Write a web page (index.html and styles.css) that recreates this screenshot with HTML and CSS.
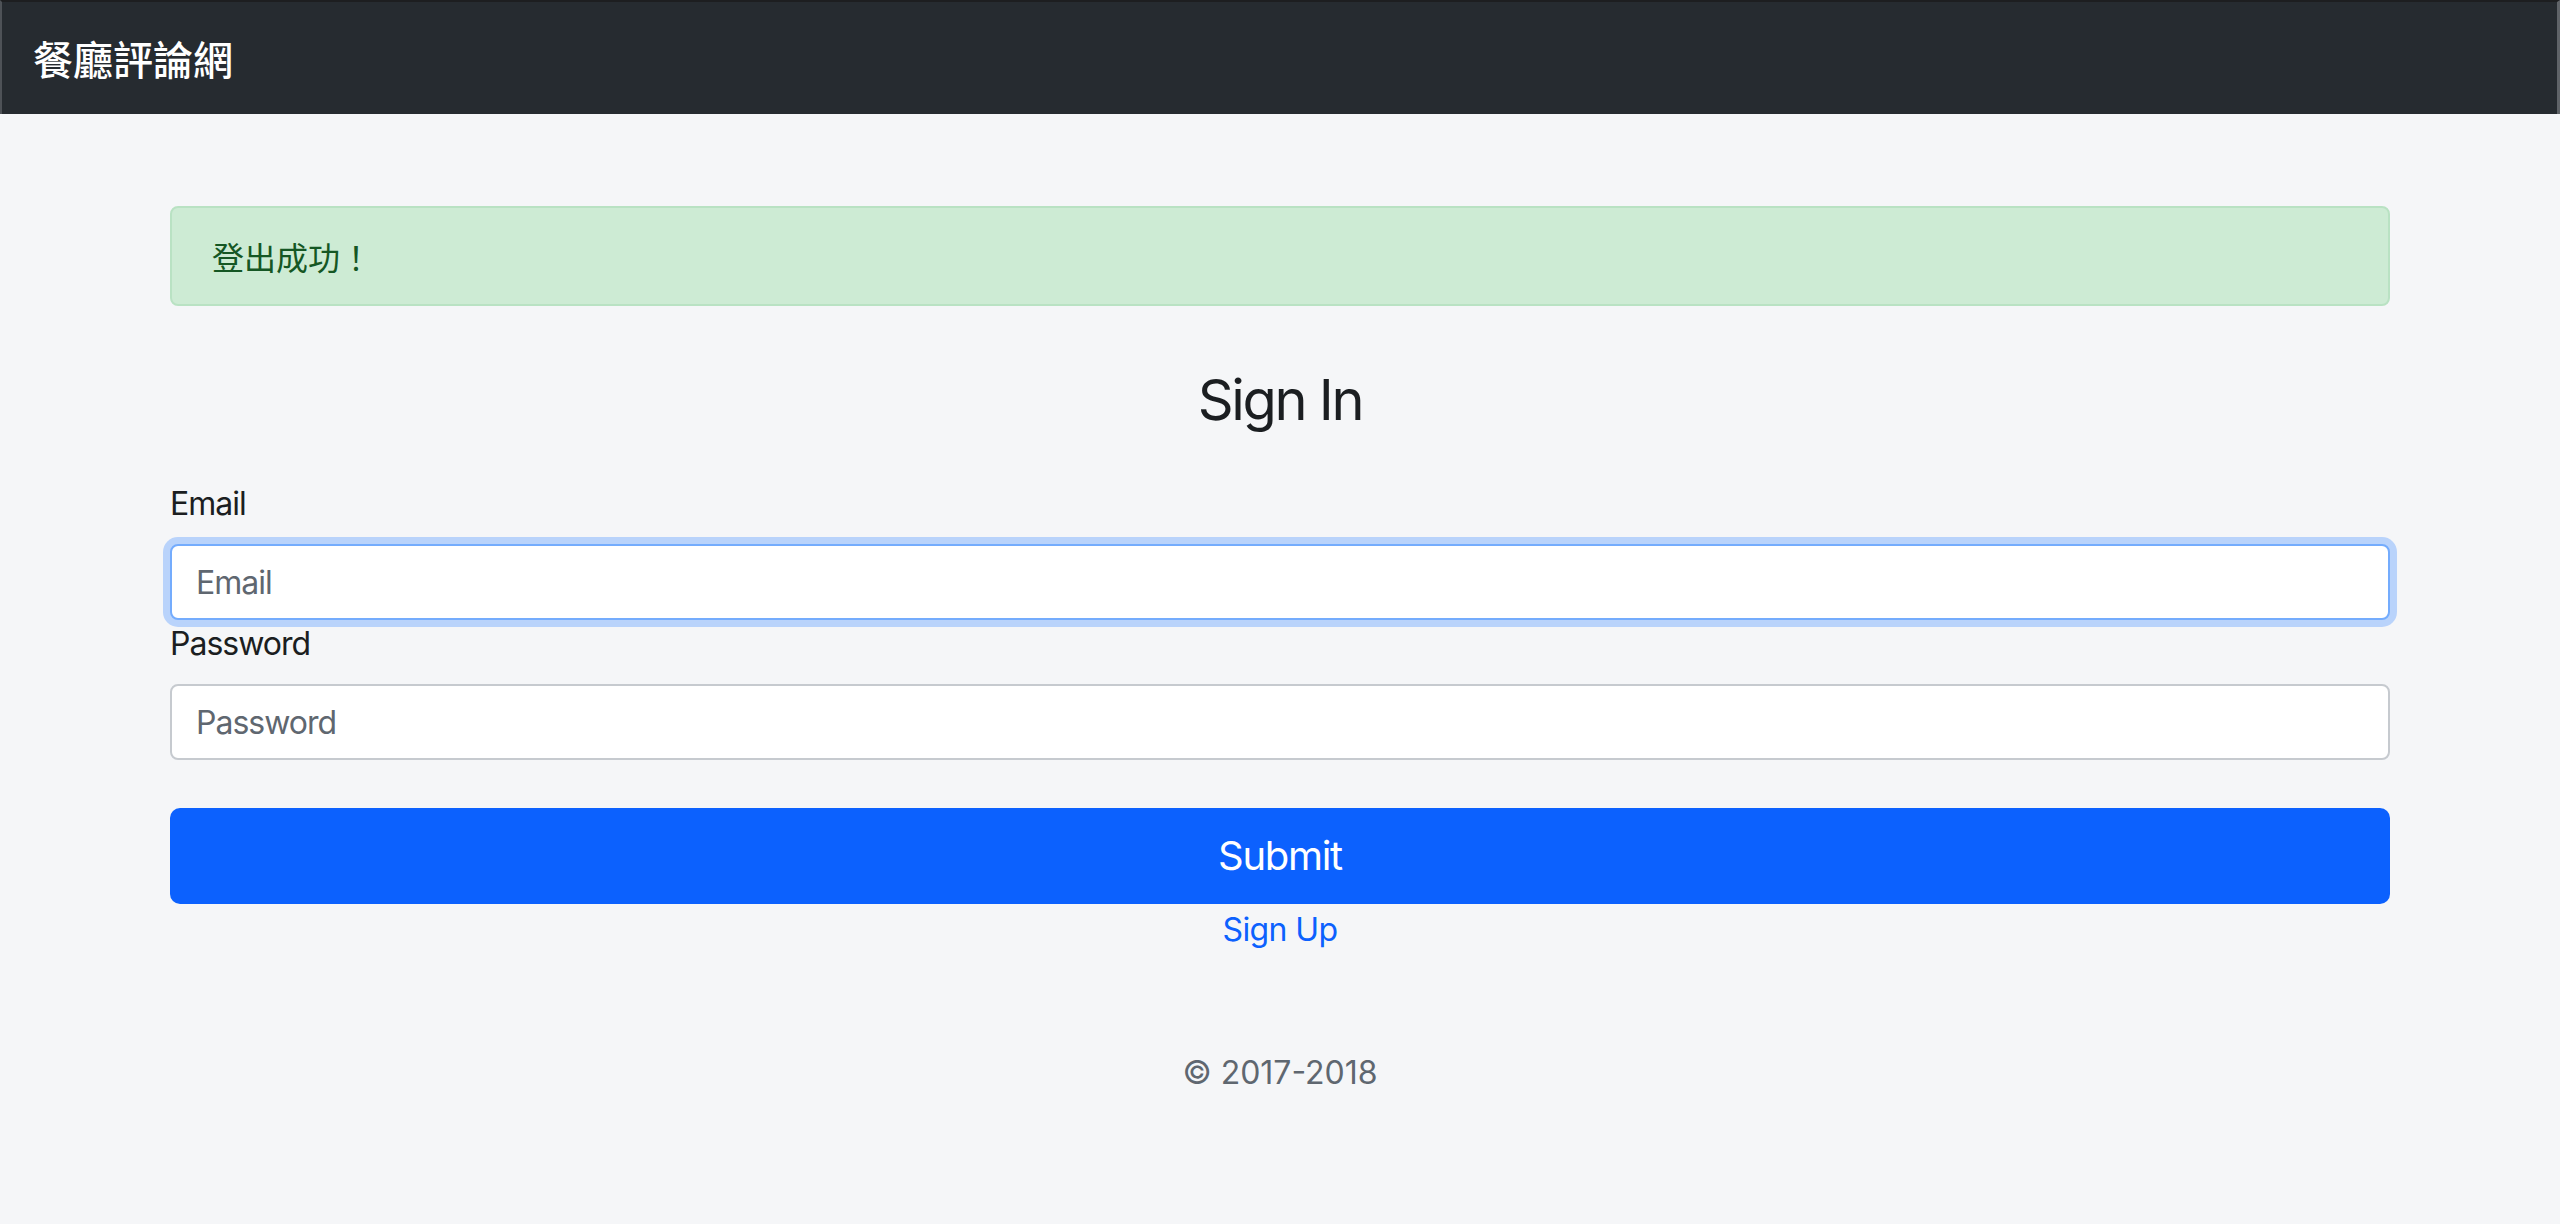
FILE: index.html
```html
<!DOCTYPE html>
<html lang="zh-Hant">
<head>
<meta charset="utf-8">
<title>餐廳評論網</title>
<link rel="stylesheet" href="styles.css">
</head>
<body>
<nav class="navbar">
  <a class="brand" href="#">餐廳評論網</a>
</nav>
<main class="container">
  <div class="alert">登出成功！</div>
  <h3 class="title">Sign In</h3>
  <form class="form">
    <label class="label" for="email">Email</label>
    <input class="control is-focused" id="email" type="email" placeholder="Email">
    <label class="label" for="password">Password</label>
    <input class="control" id="password" type="password" placeholder="Password">
    <button class="btn" type="button">Submit</button>
    <a class="link" href="#">Sign Up</a>
  </form>
  <footer class="footer">© 2017-2018</footer>
</main>
</body>
</html>
```
FILE: styles.css
```css
* { box-sizing: border-box; }
html, body { margin: 0; padding: 0; }
body {
  background: #f5f6f8;
  font-family: "Inter", "Noto Sans CJK TC", sans-serif;
  font-size: 32px;
  line-height: 48px;
  letter-spacing: -1px;
  color: #212529;
}
.navbar {
  height: 114px;
  background: #262b30;
  border-top: 2px solid #1d1e20;
  border-left: 2px solid #4e5257;
  border-right: 3px solid #5f6368;
  display: flex;
  align-items: center;
  padding: 0 31px;
}
.brand {
  color: #fff;
  text-decoration: none;
  font-family: "Noto Sans CJK TC", sans-serif;
  font-size: 40px;
  line-height: 60px;
  font-weight: 500;
  letter-spacing: 0;
}
.container {
  width: 2220px;
  margin: 0 auto;
  padding-top: 92px;
}
.alert {
  background: #cdebd4;
  border: 2px solid #b9e2c3;
  color: #155724;
  border-radius: 8px;
  padding: 24px 40px;
  line-height: 48px;
  font-family: "Noto Sans CJK TC", sans-serif;
  font-size: 32px;
  letter-spacing: 0;
  margin-bottom: 32px;
}
.title {
  text-align: center;
  font-size: 56px;
  font-weight: 400;
  line-height: 67px;
  letter-spacing: -2.3px;
  margin: 61px 0 46px;
  color: #1b1e21;
}
.form { display: flex; flex-direction: column; }
.label {
  display: block;
  font-size: 32px;
  line-height: 48px;
  margin-bottom: 16px;
  color: #1b1e21;
}
.control {
  display: block;
  width: 100%;
  height: 76px;
  border: 2px solid #c6cacf;
  border-radius: 8px;
  background: #fff;
  padding: 12px 24px;
  font-family: "Inter", sans-serif;
  font-size: 32px;
  letter-spacing: -1px;
  color: #495057;
  outline: none;
}
.control::placeholder { color: #5f6770; opacity: 1; }
.control.is-focused {
  border-color: #74acfd;
  box-shadow: 0 0 0 7px #b9d3fb;
}
.btn {
  margin-top: 48px;
  width: 100%;
  height: 96px;
  border: none;
  border-radius: 10px;
  background: #0c61fe;
  color: #fff;
  font-family: "Inter", sans-serif;
  font-size: 40px;
  line-height: 60px;
  letter-spacing: -1.3px;
  cursor: pointer;
}
.link {
  display: block;
  text-align: center;
  color: #0c61fe;
  text-decoration: none;
  line-height: 48px;
  letter-spacing: -0.6px;
  margin-top: 2px;
  align-self: center;
}
.footer {
  text-align: center;
  color: #5f6770;
  margin-top: 95px;
  line-height: 48px;
  letter-spacing: 0;
}
```
